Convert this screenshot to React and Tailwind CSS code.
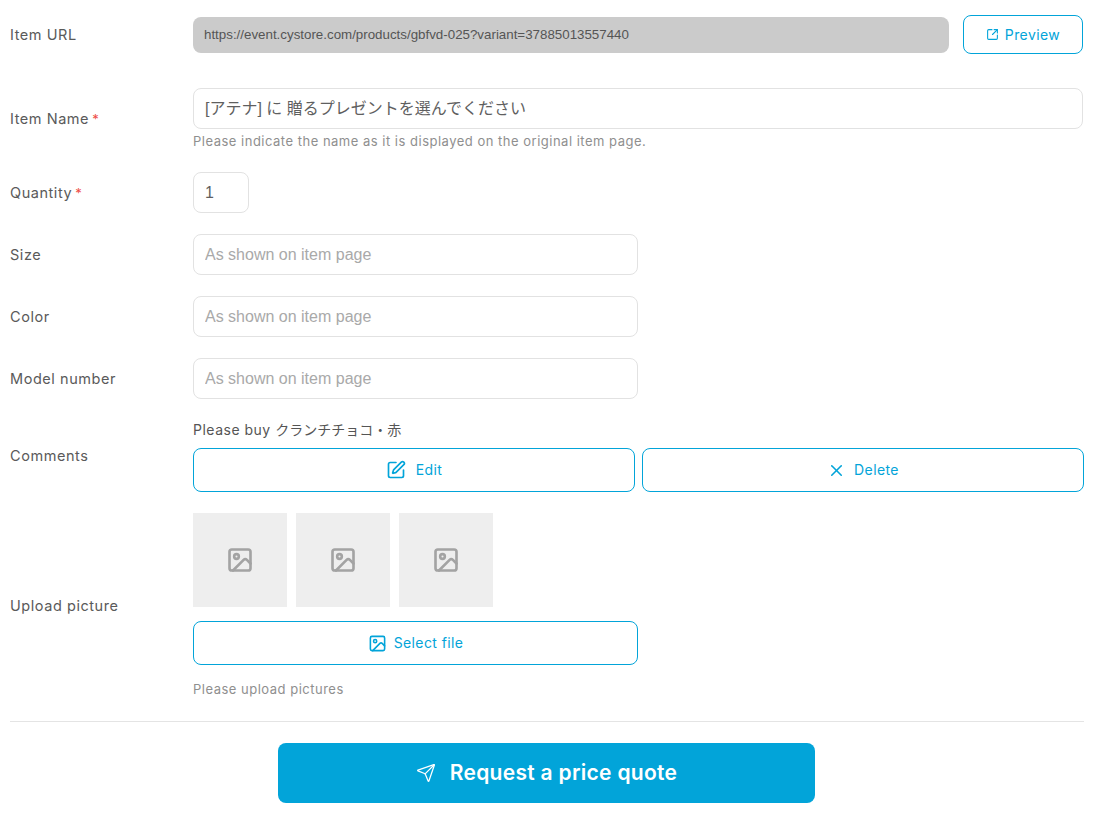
import { Image, Send, SquarePen, SquareArrowOutUpRight, X } from 'lucide-react'

const sans = 'font-["Inter","Noto_Sans_CJK_JP",sans-serif]'
const helvetica = 'font-["Liberation_Sans","Noto_Sans_CJK_JP",sans-serif]'

function Row({ label, required, children, className = '' }) {
  return (
    <div className={`flex items-center ${className}`}>
      <div className="w-[183px] shrink-0 text-[14.5px] leading-5 tracking-[0.55px] text-[#5a5a5a]">
        {label}
        {required ? <span className="ml-[3px] text-[13px] text-[#ee4b45]">*</span> : null}
      </div>
      <div className="min-w-0 flex-1">{children}</div>
    </div>
  )
}

function TextInput({ value, placeholder, className = '' }) {
  return (
    <input
      readOnly
      value={value}
      placeholder={placeholder}
      className={`block h-[41px] rounded-lg border border-[#e2e2e2] bg-white px-[11px] text-base text-[#5f5f5f] outline-none placeholder:text-[#a9a9a9] ${helvetica} ${className}`}
    />
  )
}

function OutlineButton({ children, className = '' }) {
  return (
    <button
      type="button"
      className={`flex items-center justify-center rounded-lg border border-[#02a4d9] bg-white text-sm tracking-[0.4px] text-[#02a4d9] ${className}`}
    >
      {children}
    </button>
  )
}

function Thumb() {
  return (
    <div className="flex h-[94px] w-[94px] items-center justify-center bg-[#eeeeee]">
      <Image size={28} strokeWidth={2.25} className="text-[#a3a3a3]" />
    </div>
  )
}

export default function App() {
  return (
    <div className={`h-[837px] bg-white pl-[10px] pr-[23px] pt-[15px] ${sans}`}>
      <Row label="Item URL" className="h-[39px]">
        <div className="flex items-center">
          <div className={`flex h-9 w-[756px] items-center rounded-lg bg-[#cbcbcb] px-[11px] text-[13.33px] text-[#555] ${helvetica}`}>
            https://event.cystore.com/products/gbfvd-025?variant=37885013557440
          </div>
          <OutlineButton className="ml-[14px] h-[39px] w-[120px] gap-[6px]">
            <SquareArrowOutUpRight size={13} strokeWidth={2} />
            Preview
          </OutlineButton>
        </div>
      </Row>

      <Row label="Item Name" required className="mt-[34px]">
        <TextInput value="[アテナ] に 贈るプレゼントを選んでください" className="w-[890px] pb-[3px]" />
        <p className="mt-1 text-[13px] leading-4 tracking-[0.5px] text-[#8f8f8f]">
          Please indicate the name as it is displayed on the original item page.
        </p>
      </Row>

      <Row label="Quantity" required className="mt-[23px]">
        <TextInput value="1" className="w-14" />
      </Row>

      <Row label="Size" className="mt-[21px]">
        <TextInput value="" placeholder="As shown on item page" className="w-[445px]" />
      </Row>

      <Row label="Color" className="mt-[21px]">
        <TextInput value="" placeholder="As shown on item page" className="w-[445px]" />
      </Row>

      <Row label="Model number" className="mt-[21px]">
        <TextInput value="" placeholder="As shown on item page" className="w-[445px]" />
      </Row>

      <Row label="Comments" className="mt-[21px]">
        <p className="text-sm leading-5 tracking-[0.5px] text-[#555]">
          Please buy <span className="tracking-normal">クランチチョコ・赤</span>
        </p>
        <div className="mt-[8px] flex w-[891px] gap-[7px]">
          <OutlineButton className="h-11 w-[442px] gap-[10px]">
            <SquarePen size={20} strokeWidth={2} />
            Edit
          </OutlineButton>
          <OutlineButton className="h-11 w-[442px] gap-[8px]">
            <X size={19} strokeWidth={2} />
            Delete
          </OutlineButton>
        </div>
      </Row>

      <Row label="Upload picture" className="mt-[21px]">
        <div className="flex gap-[9px]">
          <Thumb />
          <Thumb />
          <Thumb />
        </div>
        <OutlineButton className="mt-[14px] h-11 w-[445px] gap-[7px]">
          <Image size={19} strokeWidth={2} />
          Select file
        </OutlineButton>
        <p className="mt-[14px] text-[13px] leading-5 tracking-[0.5px] text-[#8f8f8f]">Please upload pictures</p>
      </Row>

      <div className="mt-[22px] w-[1074px] border-t border-[#e4e4e4] pt-[21px]">
        <button
          type="button"
          className="ml-[268px] flex h-[60px] w-[537px] items-center justify-center gap-[14px] rounded-lg bg-[#02a4d9] text-[21px] font-semibold tracking-[0.3px] text-white"
        >
          <Send size={20} strokeWidth={1.5} />
          Request a price quote
        </button>
      </div>
    </div>
  )
}
